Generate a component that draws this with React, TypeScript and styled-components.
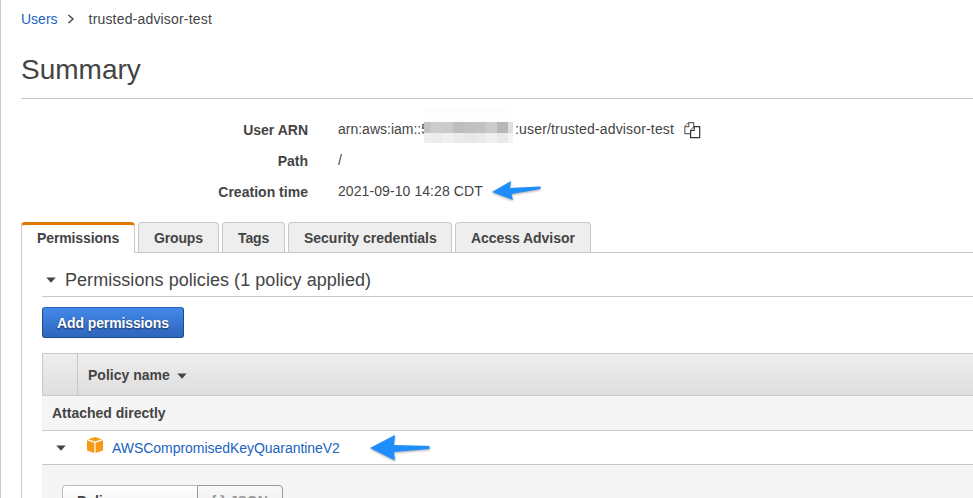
import React from "react";
import styled, { createGlobalStyle } from "styled-components";

const GlobalStyle = createGlobalStyle`
  * { box-sizing: border-box; }
  html, body { margin: 0; padding: 0; background: #fff; overflow: hidden; }
`;

const line = "#c8c8c8";
const ink = "#444";
const blue = "#2063c0";

const Page = styled.main`
  width: 973px;
  height: 498px;
  overflow: hidden;
  border-left: 1px solid ${line};
  padding-left: 20px;
  background: #fff;
  color: ${ink};
  font: 14px/20px "Liberation Sans", Arial, sans-serif;
  white-space: nowrap;
`;

const Label = styled.span<{ $track?: number }>`
  letter-spacing: ${(p) => p.$track ?? 0}px;
`;

const Breadcrumb = styled.nav`
  display: flex;
  align-items: center;
  height: 38px;
  padding-bottom: 1px;
`;

const Crumb = styled.a`
  color: ${blue};
  text-decoration: none;
`;

const CrumbChevron = styled.svg`
  width: 8px;
  height: 10px;
  margin: 0 14px 0 9px;
`;

const Title = styled.h1`
  margin: 0;
  height: 61px;
  padding-top: 14px;
  border-bottom: 1px solid ${line};
  font-size: 28px;
  line-height: 35px;
  font-weight: 400;
`;

const Details = styled.dl`
  display: grid;
  grid-template-columns: 287px auto;
  grid-template-rows: 31px 31px 31px;
  column-gap: 30px;
  margin: 0;
  padding-top: 15px;
  height: 123px;
`;

const Term = styled.dt`
  font-weight: 700;
  text-align: right;
  line-height: 32px;
`;

const Value = styled.dd`
  display: flex;
  align-items: center;
  margin: 0;
  height: 30px;
`;

const Mosaic = styled.span`
  display: grid;
  grid-template-columns: 7px repeat(7, 11px) 5px;
  grid-template-rows: 13px 11px 10px;
  flex: none;
  width: 89px;
  height: 34px;
  margin: -8px 2px -2px -5px;
  z-index: 1;
`;

const MosaicCell = styled.i<{ $tone: string }>`
  background: ${(p) => p.$tone};
`;

const CopyIcon = styled.svg`
  width: 17px;
  height: 17px;
  margin: 2px 0 0 10px;
`;

const ArrowIcon = styled.svg<{ $gap: number }>`
  margin-left: ${(p) => p.$gap}px;
  flex: none;
  overflow: visible;
  filter: drop-shadow(0 1px 1px rgba(0, 0, 0, 0.35));
`;

const Tabs = styled.div`
  display: flex;
  gap: 3px;
  height: 31px;
  border-bottom: 1px solid ${line};
`;

const Tab = styled.button<{ $width: number; $active?: boolean }>`
  display: flex;
  width: ${(p) => p.$width}px;
  height: ${(p) => (p.$active ? 31 : 30)}px;
  padding: ${(p) => (p.$active ? 0 : 2)}px 0 0 15px;
  border: 1px solid ${line};
  border-bottom: 0;
  border-top: ${(p) => (p.$active ? "3px solid #e07700" : `1px solid ${line}`)};
  border-radius: 4px 4px 0 0;
  background: ${(p) => (p.$active ? "#fff" : "#eee")};
  color: ${ink};
  font: 700 14px/26px "Liberation Sans", Arial, sans-serif;
`;

const Panel = styled.section`
  height: 245px;
  padding-left: 20px;
  border-left: 1px solid ${line};
`;

const SectionHead = styled.h2`
  display: flex;
  align-items: center;
  gap: 9px;
  margin: 0;
  height: 44px;
  padding: 10px 0 0 4px;
  border-bottom: 1px solid ${line};
  font-size: 18px;
  line-height: 22px;
  font-weight: 400;
`;

const Caret = styled.svg`
  width: 10px;
  height: 6px;
  margin-top: 1px;
  flex: none;
  fill: ${ink};
`;

const AddButton = styled.button`
  display: block;
  width: 142px;
  height: 31px;
  margin: 10px 0 15px;
  padding: 1px 0 0;
  border: 1px solid #1c4a8c;
  border-top-color: #2a63b8;
  border-radius: 3px;
  background: linear-gradient(#4389e9, #2f65bd);
  color: #fff;
  font: 700 14px/26px "Liberation Sans", Arial, sans-serif;
  text-shadow: 0 1px 2px rgba(0, 0, 0, 0.6);
`;

const TableHead = styled.div`
  display: grid;
  grid-template-columns: 34px auto;
  height: 43px;
  border: 1px solid ${line};
  border-right: 0;
  background: linear-gradient(#eee, #dedede);
  font-weight: 700;
`;

const HeadCell = styled.div`
  display: flex;
  align-items: center;
  gap: 7px;
  padding: 1px 0 0 10px;
  border-left: 1px solid ${line};
  &:first-child { border-left: 0; }
`;

const GroupRow = styled.div`
  height: 35px;
  padding: 7px 0 0 10px;
  border-bottom: 1px solid ${line};
  background: #f5f5f5;
  font-weight: 700;
`;

const PolicyRow = styled.div`
  display: flex;
  align-items: center;
  height: 34px;
  padding-left: 14px;
  border-bottom: 1px solid ${line};
`;

const BoxIcon = styled.svg`
  width: 16px;
  height: 16px;
  margin: -5px 9px 0 21px;
`;

const Expanded = styled.div`
  display: flex;
  height: 33px;
  padding: 20px 0 0 20px;
  background: #f5f5f5;
  overflow: hidden;
`;

const ViewButton = styled.button<{ $width: number; $pressed?: boolean }>`
  flex: none;
  width: ${(p) => p.$width}px;
  height: 30px;
  padding: 1px 0 0 ${(p) => (p.$pressed ? 13 : 14)}px;
  border: 1px solid ${(p) => (p.$pressed ? "#999" : "#bbb")};
  border-right-width: ${(p) => (p.$pressed ? 1 : 0)}px;
  border-radius: ${(p) => (p.$pressed ? "0 4px 4px 0" : "4px 0 0 4px")};
  background: ${(p) => (p.$pressed ? "linear-gradient(#f8f8f8, #eee)" : "linear-gradient(#fff, #eee)")};
  color: ${(p) => (p.$pressed ? "#999" : ink)};
  font: 700 14px/26px "Liberation Sans", Arial, sans-serif;
  text-align: left;
`;

const mosaicTones = [
  "#fdfdfd", "#fdfdfd", "#fdfdfd", "#fdfdfd", "#fdfdfd", "#fdfdfd", "#fdfdfd", "#fdfdfd", "#fefefe",
  "#c4c4c4", "#cdcdcd", "#cbcbcb", "#bebebe", "#c1c1c1", "#c2c2c2", "#cbcbcb", "#b7b7b7", "#dedede",
  "#efefef", "#ececec", "#f0f0f0", "#ebebeb", "#e7e7e7", "#eaeaea", "#f0f0f0", "#e9e9e9", "#f4f4f4",
];

const tabs = [
  { name: "Permissions", width: 114, active: true, track: -0.11 },
  { name: "Groups", width: 81, track: -0.15 },
  { name: "Tags", width: 63, track: -0.1 },
  { name: "Security credentials", width: 164, track: -0.02 },
  { name: "Access Advisor", width: 136, track: -0.05 },
];

function DownCaret() {
  return (
    <Caret viewBox="0 0 10 6">
      <path d="M.3.4h9.4L5 5.7z" />
    </Caret>
  );
}

export default function App() {
  return (
    <>
      <GlobalStyle />
      <Page>
        <Breadcrumb>
          <Crumb><Label>Users</Label></Crumb>
          <CrumbChevron viewBox="0 0 8 10">
            <path d="M1.5 1 6 5 1.5 9" fill="none" stroke={ink} strokeWidth="1.4" />
          </CrumbChevron>
          <Label $track={0.18}>trusted-advisor-test</Label>
        </Breadcrumb>
        <Title><Label>Summary</Label></Title>
        <Details>
          <Term>User ARN</Term>
          <Value>
            <Label>arn:aws:iam::5</Label>
            <Mosaic>
              {mosaicTones.map((tone, i) => <MosaicCell key={i} $tone={tone} />)}
            </Mosaic>
            <Label $track={0.16}>:user/trusted-advisor-test</Label>
            <CopyIcon viewBox="0 0 17 17" fill="#fff" stroke="#666" strokeWidth="1.2">
              <path d="M4.7.7h5v11H.8V4.8z" />
              <path d="M4.7.7v4H.8" />
              <path d="M10.2 4.7h5.5v11H6.6V8.5z" stroke="#333" />
              <path d="M10.2 4.7v3.8H6.6" stroke="#333" />
            </CopyIcon>
          </Value>
          <Term>Path</Term>
          <Value>/</Value>
          <Term><Label $track={0.02}>Creation time</Label></Term>
          <Value>
            <Label $track={0.08}>2021-09-10 14:28 CDT</Label>
            <ArrowIcon $gap={9} width="49" height="20" viewBox="0 0 49 20">
              <path d="M0 11 19 0 18 7 48.5 5.5V8L19.5 13 21 19z" fill="#1e8efc" />
            </ArrowIcon>
          </Value>
        </Details>
        <Tabs>
          {tabs.map((tab) => (
            <Tab key={tab.name} $width={tab.width} $active={tab.active}>
              <Label $track={tab.track}>{tab.name}</Label>
            </Tab>
          ))}
        </Tabs>
        <Panel>
          <SectionHead>
            <DownCaret />
            <Label $track={0.05}>Permissions policies (1 policy applied)</Label>
          </SectionHead>
          <AddButton><Label $track={-0.12}>Add permissions</Label></AddButton>
          <TableHead>
            <HeadCell />
            <HeadCell>
              <Label>Policy name</Label>
              <DownCaret />
            </HeadCell>
          </TableHead>
          <GroupRow><Label>Attached directly</Label></GroupRow>
          <PolicyRow>
            <DownCaret />
            <BoxIcon viewBox="0 0 16 16" fill="#f59b16">
              <path d="M8 0 15 2.2 8 4.6 1 2.2z" />
              <path d="M0 3.2 7.4 5.7V16L0 13.5z" />
              <path d="M16 3.2 8.6 5.7V16l7.4-2.5z" />
            </BoxIcon>
            <Crumb><Label $track={-0.04}>AWSCompromisedKeyQuarantineV2</Label></Crumb>
            <ArrowIcon $gap={30} width="60" height="26" viewBox="0 0 60 26">
              <path d="M0 13 25 0 24 10 59.5 11V14L24 17 25 25.5z" fill="#1e8efc" />
            </ArrowIcon>
          </PolicyRow>
          <Expanded>
            <ViewButton $width={135}>Policy</ViewButton>
            <ViewButton $width={86} $pressed>{"{ } JSON"}</ViewButton>
          </Expanded>
        </Panel>
      </Page>
    </>
  );
}
